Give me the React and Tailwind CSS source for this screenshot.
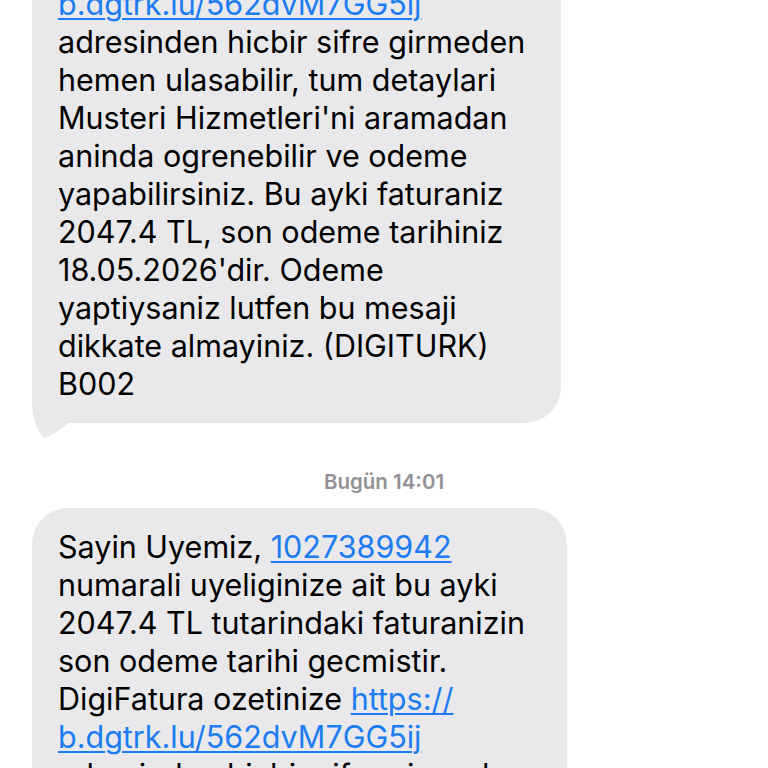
import React from "react";

const Link = ({ children }) => (
    <span className="text-[#1d7cf2] underline decoration-[1.5px] underline-offset-[3px]">
        {children}
    </span>
);

const Bubble = ({ lines, width, tail, className = "" }) => (
    <div
        className={`relative rounded-[36px] bg-[#e9e9eb] pl-[26px] pt-[18px] pb-[20px] ${width} ${className}`}>
        {tail && (
            <svg
                className="absolute left-0 top-full -mt-[43px]"
                width="58"
                height="65"
                viewBox="0 0 58 65">
                <path
                    d="M0,0 L0,24 C1,40 5,50 12,58 C21,55 30,49 36,43 L58,43 L58,0 Z"
                    fill="#e9e9eb"
                />
            </svg>
        )}
        {lines.map((line, i) => (
            <div key={i} className="relative whitespace-nowrap">
                {line}
            </div>
        ))}
    </div>
);

const first = [
    <Link>b.dgtrk.lu/562dvM7GG5ij</Link>,
    "adresinden hicbir sifre girmeden",
    "hemen ulasabilir, tum detaylari",
    "Musteri Hizmetleri'ni aramadan",
    "aninda ogrenebilir ve odeme",
    "yapabilirsiniz. Bu ayki faturaniz",
    "2047.4 TL, son odeme tarihiniz",
    "18.05.2026'dir. Odeme",
    "yaptiysaniz lutfen bu mesaji",
    "dikkate almayiniz. (DIGITURK)",
    "B002",
];

const second = [
    <>
        Sayin Uyemiz, <Link>1027389942</Link>
    </>,
    "numarali uyeliginize ait bu ayki",
    "2047.4 TL tutarindaki faturanizin",
    "son odeme tarihi gecmistir.",
    <>
        DigiFatura ozetinize <Link>https://</Link>
    </>,
    <Link>b.dgtrk.lu/562dvM7GG5ij</Link>,
    "adresinden hicbir sifre girmeden",
    "hemen ulasabilir, tum detaylari",
];

export default function App() {
    return (
        <div className="h-[768px] w-[768px] overflow-hidden bg-white font-['Inter',sans-serif] text-[30.5px] leading-[38px] text-black">
            <div className="-mt-[33px] flex flex-col">
                <div className="pl-[32px]">
                    <Bubble lines={first} width="w-[529px]" tail />
                </div>
                <div className="mt-[47px] mb-[14px] text-center text-[20.5px] leading-[24px] font-semibold text-[#929296]">
                    Bugün 14:01
                </div>
                <div className="pl-[32px]">
                    <Bubble lines={second} width="w-[535px]" className="pt-[20px]" />
                </div>
            </div>
        </div>
    );
}
